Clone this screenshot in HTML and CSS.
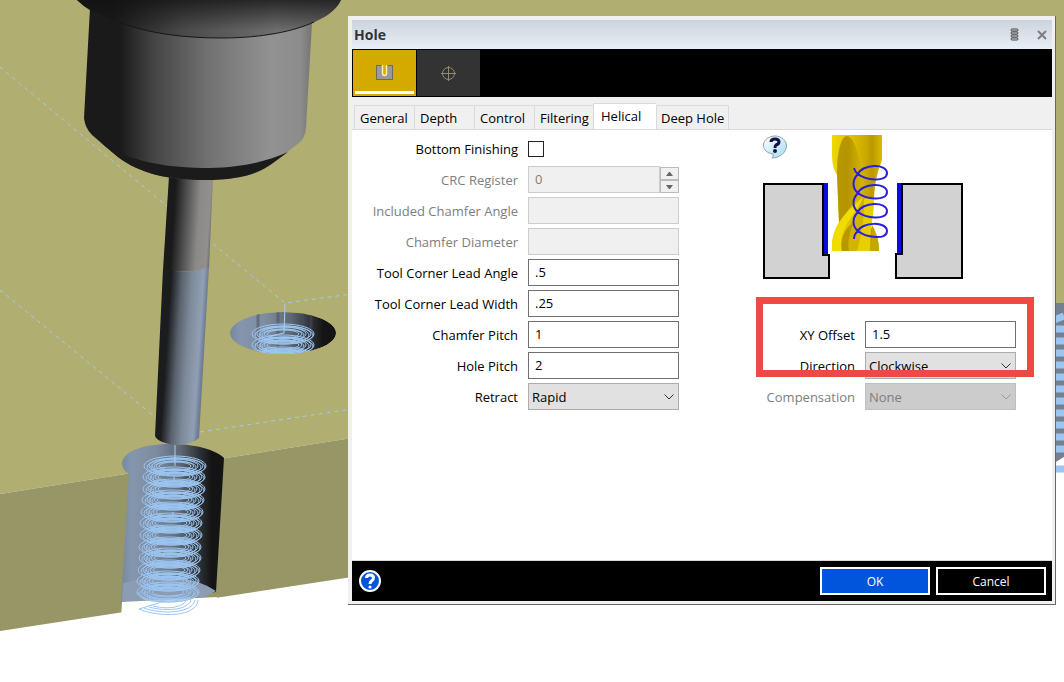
FILE: index.html
```
<!DOCTYPE html>
<html lang="en">
<head>
  <meta charset="UTF-8">
  <title>Hole</title>
  <link rel="stylesheet" href="styles.css">
</head>
<body>

<svg class="scene" viewBox="0 0 1064 682" preserveAspectRatio="xMinYMin slice" aria-hidden="true">
  <defs>
    <linearGradient id="collar" x1="78" x2="342" y1="0" y2="0" gradientUnits="userSpaceOnUse">
      <stop offset="0.14" stop-color="#1a1a1a"/>
      <stop offset="0.4" stop-color="#4a4a4a"/>
      <stop offset="0.75" stop-color="#6e6e6e"/>
      <stop offset="1" stop-color="#626262"/>
    </linearGradient>
    <linearGradient id="collarShade" x1="0" x2="0" y1="0" y2="1">
      <stop offset="0" stop-color="#111" stop-opacity="0.75"/>
      <stop offset="0.8" stop-color="#111" stop-opacity="0"/>
    </linearGradient>
    <linearGradient id="holder" x1="84" x2="312" y1="0" y2="0" gradientUnits="userSpaceOnUse">
      <stop offset="0.16" stop-color="#1a1a1a"/>
      <stop offset="0.3" stop-color="#434343"/>
      <stop offset="0.55" stop-color="#727272"/>
      <stop offset="0.82" stop-color="#929292"/>
      <stop offset="0.95" stop-color="#8c8c8c"/>
      <stop offset="1" stop-color="#747474"/>
    </linearGradient>
    <linearGradient id="shank" x1="167" x2="212" y1="220" y2="223" gradientUnits="userSpaceOnUse">
      <stop offset="0.14" stop-color="#1a1a1a"/>
      <stop offset="0.4" stop-color="#505050"/>
      <stop offset="0.7" stop-color="#8c8a89"/>
      <stop offset="0.93" stop-color="#928f8e"/>
      <stop offset="1" stop-color="#6c6c6c"/>
    </linearGradient>
    <linearGradient id="cutter" x1="160" x2="205" y1="350" y2="353" gradientUnits="userSpaceOnUse">
      <stop offset="0.14" stop-color="#1b1c1e"/>
      <stop offset="0.38" stop-color="#5a636f"/>
      <stop offset="0.6" stop-color="#7d8999"/>
      <stop offset="0.86" stop-color="#90a0b4"/>
      <stop offset="0.94" stop-color="#748399"/>
      <stop offset="1" stop-color="#66758a"/>
    </linearGradient>
    <linearGradient id="bore" x1="0" x2="1" y1="0" y2="0">
      <stop offset="0" stop-color="#76869d"/>
      <stop offset="0.1" stop-color="#8496ae"/>
      <stop offset="0.35" stop-color="#7d8b9e"/>
      <stop offset="0.58" stop-color="#5d6672"/>
      <stop offset="0.78" stop-color="#2a2d31"/>
      <stop offset="0.88" stop-color="#141414"/>
    </linearGradient>
    <clipPath id="smallHole"><ellipse cx="283" cy="333" rx="53" ry="21"/></clipPath>
    <g id="coil">
      <ellipse rx="31" ry="10"/>
      <ellipse rx="29" ry="9" cx="1" cy="1"/>
      <ellipse rx="27" ry="8" cx="1"/>
      <ellipse rx="25" ry="8" cx="1" cy="1"/>
      <ellipse rx="23" ry="7"/>
      <ellipse rx="21" ry="6" cy="1"/>
      <ellipse rx="19" ry="5"/>
      <ellipse rx="16" ry="4"/>
    </g>
  </defs>

  <!-- stock -->
  <path class="stock-top" d="M0 0H1064V304H352V438L0 494Z"/>
  <path class="stock-side" d="M0 494L352 438V577L0 631Z"/>

  <!-- rapid moves -->
  <path class="rapid" d="M0 67L168 207M213 244L285 303L352 294M0 290L155 417M200 432L352 409"/>

  <!-- small hole -->
  <g clip-path="url(#smallHole)">
    <ellipse cx="283" cy="333" rx="53" ry="21" fill="url(#bore)"/>
    <path d="M258 312V354M278 312V354M303 312V354M311 312V354" stroke="#464e5a" stroke-opacity="0.5" stroke-width="3"/>
    <g class="coils">
      <use href="#coil" x="283" y="334"/>
      <use href="#coil" x="283" y="345"/>
      <use href="#coil" x="282" y="357"/>
    </g>
  </g>
  <path class="feed" d="M285 304L284 333L270 336"/>

  <!-- sectioned hole -->
  <path d="M122 463C124 450 146 444 170 444C196 444 216 450 224 458L216 592L121 603L129 474Q122 470 122 463Z" fill="url(#bore)"/>
  <path d="M123 583Q145 577 174 577Q200 580 216 591L205 597L122 602Z" fill="#8c9cb3"/>
  <path d="M122 602L217 597L217 620H121Z" fill="#fff"/>
  <g class="coils">
    <use href="#coil" x="175" y="466"/>
    <use href="#coil" x="174" y="477"/>
    <use href="#coil" x="174" y="489"/>
    <use href="#coil" x="173" y="500"/>
    <use href="#coil" x="172" y="512"/>
    <use href="#coil" x="171" y="523"/>
    <use href="#coil" x="171" y="535"/>
    <use href="#coil" x="170" y="547"/>
    <use href="#coil" x="170" y="558"/>
    <use href="#coil" x="169" y="570"/>
    <use href="#coil" x="168" y="581"/>
    <use href="#coil" x="168" y="592"/>
    <path d="M139 609C160 618 197 617 198 600M144 608C162 615 193 613 195 600M149 607C166 612 190 610 191 599M139 609L165 601C150 602 139 600 138 592M153 606C170 610 184 607 187 599"/>
  </g>
  <path class="feed" d="M175 445V466M174 477V481M173 512V515"/>

  <!-- tool and holder -->
  <path d="M169 176H213L209 268Q190 274 163 270Z" fill="url(#shank)"/>
  <path d="M163 269Q190 275 209 267L199 438Q192 445 176 445Q158 443 155 436Z" fill="url(#cutter)"/>
  <path d="M90 8L84 118Q85 128 92 135L118 157C140 174 170 180 205 180C240 180 260 173 273 163L299 143Q305 138 306 128L312 22Z" fill="url(#holder)"/>
  <path d="M100 142L118 153C145 163 170 168 210 168C245 167 268 161 288 152L273 163C260 173 240 180 205 180C170 180 140 174 118 157Z" fill="#1b1b1b"/>
  <path d="M77 0Q83 6 90 10L116 22C150 34 185 38 222 38C270 38 330 26 341 0Z" fill="url(#collar)"/>
  <path d="M77 0Q83 6 90 10L116 22C150 34 185 38 222 38C270 38 330 26 341 0Z" fill="url(#collarShade)"/>
  <path d="M118 22C150 34 185 38 222 38C262 38 295 31 314 22" fill="none" stroke="#161616"/>

  <!-- neighbouring hole, right edge of the part -->
  <rect x="1054" y="303" width="10" height="160" fill="#74808f"/>
  <path d="M1054 463L1064 457V466L1054 472Z" fill="#fff"/>
  <path class="side-coils" d="M1054 320L1064 316M1054 329H1064M1054 341H1064M1054 353H1064M1054 365H1064M1054 377H1064M1054 389H1064M1054 401H1064M1054 413H1064M1054 425H1064M1054 437H1064M1054 449H1064M1054 469H1064"/>
</svg>

<form class="dialog">
  <header class="titlebar">
    <h1>Hole</h1>
    <button type="button" class="icon-btn" aria-label="Menu">
      <svg width="10" height="13" viewBox="0 0 10 13" fill="none" stroke="#444">
        <rect x="1" y="1" width="7" height="2" rx="1"/><rect x="1" y="4" width="7" height="2" rx="1"/>
        <rect x="1" y="7" width="7" height="2" rx="1"/><rect x="1" y="10" width="7" height="2" rx="1"/>
      </svg>
    </button>
    <button type="button" class="icon-btn" aria-label="Close">
      <svg width="10" height="10" viewBox="0 0 10 10" stroke="#7d7d7d" stroke-width="2"><path d="M1 1L9 9M9 1L1 9"/></svg>
    </button>
  </header>

  <div class="modes">
    <button type="button" class="mode active" aria-label="Hole">
      <svg width="17" height="16" viewBox="0 0 17 16">
        <rect x="0.5" y="1.5" width="16" height="14" fill="#999" stroke="#6c6a5c"/>
        <path d="M6.500 1V9Q6.500 11.500 8.500 11.500Q10.500 11.500 10.500 9V1" fill="#d4a900" stroke="#ffeFA0" stroke-width="1.500"/>
      </svg>
    </button>
    <button type="button" class="mode" aria-label="Position">
      <svg width="16" height="16" viewBox="0 0 16 16" fill="none" stroke="#8f8a70">
        <circle cx="7.500" cy="8.500" r="6"/><path d="M7.500 1V16M0 8.500H15"/>
      </svg>
    </button>
  </div>

  <nav class="tabs">
    <button type="button" class="tab">General</button>
    <button type="button" class="tab">Depth</button>
    <button type="button" class="tab">Control</button>
    <button type="button" class="tab">Filtering</button>
    <button type="button" class="tab selected">Helical</button>
    <button type="button" class="tab deep">Deep Hole</button>
  </nav>

  <div class="panel">
    <div class="fields">
      <label for="finish">Bottom Finishing</label>
      <input type="checkbox" id="finish">

      <label for="crc" class="off">CRC Register</label>
      <div class="spinner">
        <input type="text" id="crc" value="0" disabled>
        <div class="steps">
          <button type="button" aria-label="Increase" disabled><svg width="7" height="4" viewBox="0 0 7 4"><path d="M0 4L3 0H4L7 4Z"/></svg></button>
          <button type="button" aria-label="Decrease" disabled><svg width="7" height="4" viewBox="0 0 7 4"><path d="M0 0L3 4H4L7 0Z"/></svg></button>
        </div>
      </div>

      <label for="chamferAngle" class="off">Included Chamfer Angle</label>
      <input type="text" id="chamferAngle" disabled>

      <label for="chamferDia" class="off">Chamfer Diameter</label>
      <input type="text" id="chamferDia" disabled>

      <label for="leadAngle">Tool Corner Lead Angle</label>
      <input type="text" id="leadAngle" value=".5">

      <label for="leadWidth">Tool Corner Lead Width</label>
      <input type="text" id="leadWidth" value=".25">

      <label for="chamferPitch">Chamfer Pitch</label>
      <input type="text" id="chamferPitch" value="1">

      <label for="holePitch">Hole Pitch</label>
      <input type="text" id="holePitch" value="2">

      <label for="retract">Retract</label>
      <div class="dropdown">
        <select id="retract"><option>Rapid</option></select>
        <svg width="10" height="6" viewBox="0 0 10 6"><path d="M0.500 0.500L5 5L9.500 0.500"/></svg>
      </div>
    </div>

    <div class="side">
      <div class="diagram">
        <svg width="200" height="144" viewBox="0 0 200 144">
          <defs>
            <linearGradient id="gold" x1="0" x2="1" y1="0" y2="0">
              <stop offset="0" stop-color="#f0d800"/>
              <stop offset="0.4" stop-color="#dfc000"/>
              <stop offset="0.7" stop-color="#c9a700"/>
              <stop offset="0.8" stop-color="#bb9900"/>
              <stop offset="1" stop-color="#dcb800"/>
            </linearGradient>
            <linearGradient id="flute" x1="0" x2="1" y1="0" y2="0">
              <stop offset="0" stop-color="#b89800"/>
              <stop offset="0.4" stop-color="#b59500"/>
              <stop offset="1" stop-color="#d8b500"/>
            </linearGradient>
          </defs>
          <path d="M1 49H60V120H66V143H1Z" fill="#d2d2d2" stroke="#000" stroke-width="2"/>
          <path d="M139 49H199V143H133V119H139Z" fill="#d2d2d2" stroke="#000" stroke-width="2"/>
          <path d="M61 48H65V119H61ZM134 48H138V118H134Z" fill="#0b0be0"/>
          <path d="M69 0H119V25Q112 42 111 62L108 92Q116 100 116 116H69Q68 100 76 87L74 40Q69 33 69 20Z" fill="url(#gold)"/>
          <path d="M74 38C74 18 78 1 84 1C93 2 98 30 101 50C98 64 84 74 76 88Z" fill="url(#flute)"/>
          <path d="M69 116C68 94 78 82 100 62C96 76 83 84 79 101Q77 110 79 116Z" fill="#f2dc00"/>
          <path d="M79 116C77 104 80 96 88 88C95 82 98 76 101 64C103 82 106 100 94 116Z" fill="#d5b400"/>
          <path d="M79 116C77 103 82 94 90 88C87 98 84 108 86 116Z" fill="#b79800"/>
          <path d="M101 64Q102 88 94 116H107L108 92Q111 78 111 62Z" fill="#e8cf00"/>
          <path d="M107 116Q111 98 108 88Q116 100 116 116Z" fill="#c6a700"/>
          <path d="M91 33Q92 37 95 39C102 45 124 48 124 38C124 28 99 29 95 39C89 45 89 53 95 58C102 64 124 67 124 57C124 47 99 48 95 58C89 64 89 72 95 77C102 83 124 86 124 76C124 66 99 67 95 77C89 83 89 91 95 96C102 102 124 106 124 96C124 86 99 87 95 96Q91 99 91 104" fill="none" stroke="#2a20dc" stroke-width="2"/>
        </svg>
        <button type="button" class="hint" aria-label="What is this">
          <svg width="24" height="24" viewBox="0 0 24 24">
            <defs><linearGradient id="bubble" x1="0" x2="1" y1="0" y2="1"><stop offset="0" stop-color="#fff"/><stop offset="1" stop-color="#a3dcf5"/></linearGradient></defs>
            <path d="M12 1C18 1 23.500 5 23.500 11C23.500 17 17 23 9 23Q11 21 10 19C4 18 0.500 15 0.500 10C0.500 5 6 1 12 1Z" fill="url(#bubble)" stroke="#8fa3b0"/>
            <path d="M8 7Q8 4 12 4Q16 4 16 7Q16 9 13 10Q12 11 12 13" fill="none" stroke="#131344" stroke-width="3"/>
            <circle cx="12" cy="16" r="2" fill="#131344"/>
          </svg>
        </button>
      </div>

      <div class="fields offset-fields">
        <label for="xyOffset">XY Offset</label>
        <input type="text" id="xyOffset" value="1.5">

        <label for="direction">Direction</label>
        <div class="dropdown">
          <select id="direction"><option>Clockwise</option></select>
          <svg width="10" height="6" viewBox="0 0 10 6"><path d="M0.500 0.500L5 5L9.500 0.500"/></svg>
        </div>

        <label for="comp" class="off">Compensation</label>
        <div class="dropdown off">
          <select id="comp" disabled><option>None</option></select>
          <svg width="10" height="6" viewBox="0 0 10 6"><path d="M0.500 0.500L5 5L9.500 0.500"/></svg>
        </div>
        <div class="callout"></div>
      </div>
    </div>
  </div>

  <footer class="actions">
    <button type="button" class="help" aria-label="Help">
      <svg width="24" height="24" viewBox="0 0 24 24">
        <circle cx="12" cy="12" r="10" fill="#0055dc" stroke="#fff" stroke-width="2"/>
        <path d="M8.500 9Q8.500 6 12 6Q15.500 6 15.500 9Q15.500 10.500 13.500 12Q12 13 12 15" fill="none" stroke="#fff" stroke-width="3"/>
        <circle cx="12" cy="18" r="1.600" fill="#fff"/>
      </svg>
    </button>
    <button type="button" class="btn primary">OK</button>
    <button type="button" class="btn">Cancel</button>
  </footer>
</form>

</body>
</html>
```

FILE: styles.css
```
* { box-sizing: border-box; }
body {
  margin: 0;
  min-height: 100vh;
  background: #fff;
  font-family: "Open Sans", "Noto Sans", sans-serif;
  font-size: 13px;
  color: #000;
  overflow: hidden;
}
button, input, select {
  font: inherit;
  color: inherit;
  margin: 0;
  padding: 0;
  border: 0;
  border-radius: 0;
}
button { background: none; }
svg { display: block; }

/* 3D view */
.scene {
  position: fixed;
  inset: 0;
  width: 100%;
  height: 100%;
}
.stock-top { fill: #b0ae70; }
.stock-side { fill: #979666; }
.rapid {
  fill: none;
  stroke: #a5cbe6;
  stroke-dasharray: 4 4;
}
.feed { fill: none; stroke: #a6d0fa; }
.coils { fill: none; stroke: #9cc6f2; }
.side-coils { stroke: #9cc6f2; stroke-width: 7; }

/* dialog window */
.dialog {
  position: absolute;
  top: 16px;
  left: 348px;
  right: 8px;
  display: flex;
  flex-direction: column;
  padding: 4px 3px 3px 4px;
  background: #f0f0f0;
  border-right: 1px solid #666;
  border-bottom: 1px solid #666;
}
.titlebar {
  display: flex;
  align-items: center;
  gap: 17px;
  height: 29px;
  padding: 0 5px 0 2px;
  background: linear-gradient(#cdd3dc, #e9eff7);
}
.titlebar h1 {
  flex: 1;
  margin: 0;
  font-size: 14px;
  line-height: 28px;
  color: #333;
}
.icon-btn { display: flex; }

.modes {
  display: flex;
  gap: 1px;
  height: 48px;
  padding: 1px;
  background: #000;
}
.mode {
  display: flex;
  align-items: center;
  justify-content: center;
  width: 63px;
  background: #333;
}
.mode.active {
  background: #d4a900;
  border: 2px solid #d4a900;
  border-width: 0 2px 2px;
  box-shadow: inset 0 -3px #fff;
}

/* tabs */
.tabs {
  display: flex;
  align-items: flex-end;
  height: 32px;
  padding-left: 2px;
}
.tab {
  width: 60px;
  height: 24px;
  border: 1px solid #dadada;
  border-width: 1px 0 0 1px;
  text-align: left;
  padding-left: 5px;
  white-space: nowrap;
}
.tab.selected {
  width: 63px;
  height: 27px;
  margin-left: -1px;
  margin-bottom: -1px;
  padding: 0 0 2px 7px;
  background: #fff;
}
.tab.deep {
  width: 73px;
  padding-left: 4px;
  border-right-width: 1px;
}

.panel {
  display: flex;
  min-height: 432px;
  padding: 5px 0;
  background: #fff;
  border-top: 1px solid #dadada;
  border-bottom: 1px solid #dadada;
}
.fields {
  display: grid;
  grid-template-columns: 166px 151px;
  grid-auto-rows: 27px;
  align-content: start;
  align-items: center;
  gap: 4px 10px;
}
.fields label {
  text-align: right;
  white-space: nowrap;
}
.fields label.off { color: #7d7d7d; }
input[type="text"] {
  width: 100%;
  height: 27px;
  padding: 0 6px 2px;
  border: 1px solid #707070;
  background: #fff;
}
input[type="text"]:disabled {
  background: #f0f0f0;
  border-color: #ccc;
  color: #7d7d7d;
}
input[type="checkbox"] {
  appearance: none;
  width: 16px;
  height: 16px;
  border: 1px solid #222;
  background: #fff;
}
.spinner { display: flex; }
.spinner input { flex: 1; min-width: 0; }
.steps {
  display: flex;
  flex-direction: column;
  width: 19px;
  padding-top: 1px;
}
.steps button {
  flex: 1;
  display: flex;
  align-items: center;
  justify-content: center;
  border: 1px solid #bbb;
  background: #f0f0f0;
}
.steps svg { fill: #666; }

.dropdown {
  display: grid;
  align-items: center;
}
.dropdown select {
  grid-area: 1 / 1;
  appearance: none;
  width: 100%;
  height: 27px;
  padding-left: 3px;
  border: 1px solid #adadad;
  background: #e1e1e1;
}
.dropdown svg {
  grid-area: 1 / 1;
  justify-self: end;
  margin-right: 5px;
  fill: none;
  stroke: #333;
  pointer-events: none;
}
.dropdown.off select {
  background: #ccc;
  border-color: #bfbfbf;
  color: #7d7d7d;
  opacity: 1;
}
.dropdown.off svg { stroke: #999; }

.side {
  display: flex;
  flex-direction: column;
  gap: 42px;
  margin-left: 76px;
}
.diagram {
  position: relative;
  padding-left: 8px;
}
.hint {
  position: absolute;
  top: 0;
  left: 8px;
}
.offset-fields {
  position: relative;
  grid-template-columns: 100px 151px;
}
.callout {
  position: absolute;
  inset: -24px -18px 33px 1px;
  border: 7px solid #eb4b44;
  pointer-events: none;
}

.actions {
  display: flex;
  align-items: center;
  gap: 6px;
  height: 40px;
  padding: 0 6px;
  background: #000;
}
.help { margin-right: auto; }
.btn {
  width: 110px;
  height: 28px;
  border: 2px solid #fff;
  background: #000;
  color: #fff;
  font-size: 12px;
}
.btn.primary { background: #0055dc; }
```
